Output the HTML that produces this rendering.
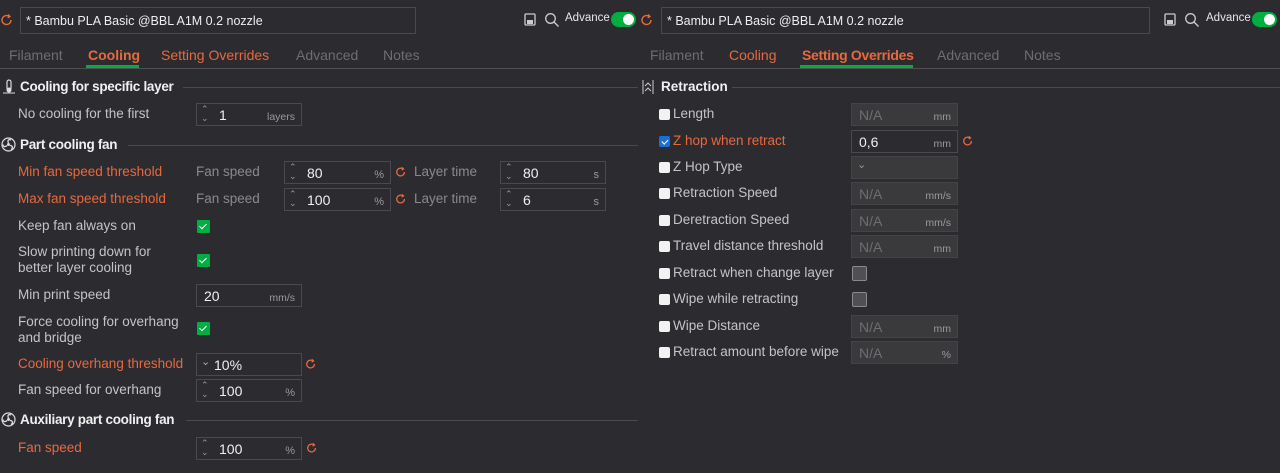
<!DOCTYPE html>
<html><head><meta charset="utf-8"><style>
*{margin:0;padding:0;box-sizing:border-box}
body{width:1280px;height:473px;background:#2c2c30;font-family:"Liberation Sans",sans-serif;font-size:13.5px;color:#c4c4c4;position:relative;overflow:hidden}
.a{position:absolute;white-space:nowrap}
.o{color:#e8683f}
.g{color:#8a8a8e}
.h{font-weight:bold;color:#f0f0f0;font-size:13.5px}
.box{position:absolute;border:1px solid #4a4a4e;height:23px}
.dis{background:#3a3a3d;border-color:#444447}
.v{position:absolute;left:22px;top:3px;color:#f0f0f0;font-size:14px}
.u{position:absolute;right:6px;top:7px;color:#9a9a9a;font-size:10.5px}
.sp{position:absolute;left:4px;top:1px;font-size:9px;color:#999;line-height:9px}
.line{position:absolute;height:1px;background:#4a4a4e}
.cb{position:absolute;width:13px;height:13px;background:#00ae42;border-radius:1px}
.cb::after{content:"";position:absolute;left:4px;top:2px;width:3px;height:6px;border:solid #fff;border-width:0 1.5px 1.5px 0;transform:rotate(45deg)}
.wc{position:absolute;width:11px;height:11px;background:#f2f2f2;border-radius:2px}
.bc{position:absolute;width:11px;height:11px;background:#1b6fd1;border-radius:2px}
.bc::after{content:"";position:absolute;left:3.5px;top:1.5px;width:2.5px;height:5px;border:solid #fff;border-width:0 1.2px 1.2px 0;transform:rotate(45deg)}
.gc{position:absolute;width:15px;height:15px;background:#505054;border:1px solid #8a8a8e;border-radius:2px}
.tog{position:absolute;width:25px;height:15px;background:#00ae42;border-radius:8px}
.tog::after{content:"";position:absolute;right:2px;top:2px;width:11px;height:11px;background:#fff;border-radius:50%}
.tab{font-size:14px;top:47px}
</style></head><body>
<svg class="a" style="left:0;top:13px" width="14" height="14" viewBox="0 0 14 14"><path d="M11 7a4.5 4.5 0 1 1-2-3.7" fill="none" stroke="#e8683f" stroke-width="1.4"/><path d="M8 1.5l2 2-2.3 1.3" fill="none" stroke="#e8683f" stroke-width="1.3"/></svg>
<div class="box" style="left:20px;top:7px;width:396px;height:27px"><span class="a" style="left:5px;top:6px;color:#eee;font-size:12.5px">* Bambu PLA Basic @BBL A1M 0.2 nozzle</span></div>
<svg class="a" style="left:524px;top:13px" width="12" height="13"><rect x="1" y="1" width="10" height="11" rx="1" fill="none" stroke="#ccc" stroke-width="1.3"/><rect x="3" y="7" width="6" height="4" fill="#ccc"/></svg>
<svg class="a" style="left:544px;top:12px" width="16" height="16"><circle cx="6.5" cy="6.5" r="4.8" fill="none" stroke="#ccc" stroke-width="1.3"/><path d="M10 10l4.5 4.5" stroke="#ccc" stroke-width="1.3"/></svg>
<span class="a" style="left:565px;top:12px;font-size:11.5px;color:#e8e8e8">Advance</span>
<div class="tog" style="left:611px;top:12px"></div>
<svg class="a" style="left:640px;top:13px" width="14" height="14" viewBox="0 0 14 14"><path d="M11 7a4.5 4.5 0 1 1-2-3.7" fill="none" stroke="#e8683f" stroke-width="1.4"/><path d="M8 1.5l2 2-2.3 1.3" fill="none" stroke="#e8683f" stroke-width="1.3"/></svg>
<div class="box" style="left:661px;top:7px;width:489px;height:27px"><span class="a" style="left:5px;top:6px;color:#eee;font-size:12.5px">* Bambu PLA Basic @BBL A1M 0.2 nozzle</span></div>
<svg class="a" style="left:1164px;top:13px" width="12" height="13"><rect x="1" y="1" width="10" height="11" rx="1" fill="none" stroke="#ccc" stroke-width="1.3"/><rect x="3" y="7" width="6" height="4" fill="#ccc"/></svg>
<svg class="a" style="left:1184px;top:12px" width="16" height="16"><circle cx="6.5" cy="6.5" r="4.8" fill="none" stroke="#ccc" stroke-width="1.3"/><path d="M10 10l4.5 4.5" stroke="#ccc" stroke-width="1.3"/></svg>
<span class="a" style="left:1206px;top:12px;font-size:11.5px;color:#e8e8e8">Advance</span>
<div class="tog" style="left:1252px;top:12px"></div>
<span class="a tab" style="left:9px;color:#6e6e72">Filament</span>
<span class="a o tab" style="left:88px;font-weight:bold">Cooling</span>
<div class="a" style="left:86px;top:65px;width:53px;height:3px;background:#00ae42"></div>
<span class="a o tab" style="left:161px">Setting Overrides</span>
<span class="a tab" style="left:296px;color:#6e6e72">Advanced</span>
<span class="a tab" style="left:383px;color:#6e6e72">Notes</span>
<span class="a tab" style="left:650px;color:#6e6e72">Filament</span>
<span class="a o tab" style="left:729px">Cooling</span>
<span class="a o tab" style="left:802px;font-weight:bold;letter-spacing:-0.3px">Setting Overrides</span>
<div class="a" style="left:800px;top:65px;width:113px;height:3px;background:#00ae42"></div>
<span class="a tab" style="left:937px;color:#6e6e72">Advanced</span>
<span class="a tab" style="left:1024px;color:#6e6e72">Notes</span>
<div class="line" style="left:0;top:68px;width:1280px;background:#505054"></div>
<svg class="a" style="left:2px;top:79px" width="14" height="15"><rect x="5" y="1" width="4" height="10" rx="2" fill="none" stroke="#ddd" stroke-width="1.2"/><circle cx="7" cy="11" r="2.5" fill="#ddd"/><path d="M1 14h12" stroke="#ddd"/></svg>
<span class="a h" style="left:20px;top:79px;letter-spacing:-0.3px">Cooling for specific layer</span>
<div class="line" style="left:183px;top:87px;width:455px"></div>
<span class="a" style="left:18px;top:106px">No cooling for the first</span>
<div class="box" style="left:196px;top:103px;width:106px"><div class="sp">⌃<br>⌄</div><span class="v">1</span><span class="u">layers</span></div>
<svg class="a" style="left:1px;top:137px" width="15" height="15"><circle cx="7.5" cy="7.5" r="6.5" fill="none" stroke="#ddd" stroke-width="1.2"/><circle cx="7.5" cy="7.5" r="1.5" fill="#ddd"/><path d="M7.5 6C6 3 8 2 10 3M9 8.5c3 0 3 3 1 4M6 8.5c-2 2-4 1-4-1" fill="none" stroke="#ddd" stroke-width="1.3"/></svg>
<span class="a h" style="left:20px;top:137px;letter-spacing:-0.3px">Part cooling fan</span>
<div class="line" style="left:128px;top:145px;width:510px"></div>
<span class="a o" style="left:18px;top:164px">Min fan speed threshold</span>
<span class="a g" style="left:196px;top:164px">Fan speed</span>
<div class="box" style="left:284px;top:161px;width:107px"><div class="sp">⌃<br>⌄</div><span class="v">80</span><span class="u" style="font-size:11px">%</span></div>
<svg class="a" style="left:395px;top:166px" width="12" height="12" viewBox="0 0 14 14"><path d="M11 7a4.5 4.5 0 1 1-2-3.7" fill="none" stroke="#e8683f" stroke-width="1.5"/><path d="M8 1.5l2 2-2.3 1.3" fill="none" stroke="#e8683f" stroke-width="1.4"/></svg>
<span class="a g" style="left:414px;top:164px">Layer time</span>
<div class="box" style="left:500px;top:161px;width:106px"><div class="sp">⌃<br>⌄</div><span class="v">80</span><span class="u" style="font-size:11px">s</span></div>
<span class="a o" style="left:18px;top:191px">Max fan speed threshold</span>
<span class="a g" style="left:196px;top:191px">Fan speed</span>
<div class="box" style="left:284px;top:188px;width:107px"><div class="sp">⌃<br>⌄</div><span class="v">100</span><span class="u" style="font-size:11px">%</span></div>
<svg class="a" style="left:395px;top:193px" width="12" height="12" viewBox="0 0 14 14"><path d="M11 7a4.5 4.5 0 1 1-2-3.7" fill="none" stroke="#e8683f" stroke-width="1.5"/><path d="M8 1.5l2 2-2.3 1.3" fill="none" stroke="#e8683f" stroke-width="1.4"/></svg>
<span class="a g" style="left:414px;top:191px">Layer time</span>
<div class="box" style="left:500px;top:188px;width:106px"><div class="sp">⌃<br>⌄</div><span class="v">6</span><span class="u" style="font-size:11px">s</span></div>
<span class="a" style="left:18px;top:218px">Keep fan always on</span>
<div class="cb" style="left:197px;top:220px"></div>
<span class="a" style="left:18px;top:244px;line-height:16px">Slow printing down for<br>better layer cooling</span>
<div class="cb" style="left:197px;top:254px"></div>
<span class="a" style="left:18px;top:287px">Min print speed</span>
<div class="box" style="left:196px;top:284px;width:106px"><span class="v" style="left:7px">20</span><span class="u">mm/s</span></div>
<span class="a" style="left:18px;top:314px;line-height:16px">Force cooling for overhang<br>and bridge</span>
<div class="cb" style="left:197px;top:322px"></div>
<span class="a o" style="left:18px;top:356px">Cooling overhang threshold</span>
<div class="box" style="left:196px;top:353px;width:106px"><span class="a" style="left:4px;top:1px;color:#aaa;font-size:11px">⌄</span><span class="v" style="left:17px">10%</span></div>
<svg class="a" style="left:305px;top:358px" width="12" height="12" viewBox="0 0 14 14"><path d="M11 7a4.5 4.5 0 1 1-2-3.7" fill="none" stroke="#e8683f" stroke-width="1.5"/><path d="M8 1.5l2 2-2.3 1.3" fill="none" stroke="#e8683f" stroke-width="1.4"/></svg>
<span class="a" style="left:18px;top:382px">Fan speed for overhang</span>
<div class="box" style="left:196px;top:379px;width:106px"><div class="sp">⌃<br>⌄</div><span class="v">100</span><span class="u" style="font-size:11px">%</span></div>
<svg class="a" style="left:1px;top:412px" width="15" height="15"><circle cx="7.5" cy="7.5" r="6.5" fill="none" stroke="#ddd" stroke-width="1.2"/><circle cx="7.5" cy="7.5" r="1.5" fill="#ddd"/><path d="M7.5 6C6 3 8 2 10 3M9 8.5c3 0 3 3 1 4M6 8.5c-2 2-4 1-4-1" fill="none" stroke="#ddd" stroke-width="1.3"/></svg>
<span class="a h" style="left:20px;top:412px;letter-spacing:-0.3px">Auxiliary part cooling fan</span>
<div class="line" style="left:186px;top:420px;width:452px"></div>
<span class="a o" style="left:18px;top:440px">Fan speed</span>
<div class="box" style="left:196px;top:437px;width:106px"><div class="sp">⌃<br>⌄</div><span class="v">100</span><span class="u" style="font-size:11px">%</span></div>
<svg class="a" style="left:306px;top:442px" width="12" height="12" viewBox="0 0 14 14"><path d="M11 7a4.5 4.5 0 1 1-2-3.7" fill="none" stroke="#e8683f" stroke-width="1.5"/><path d="M8 1.5l2 2-2.3 1.3" fill="none" stroke="#e8683f" stroke-width="1.4"/></svg>
<svg class="a" style="left:642px;top:80px" width="12" height="14"><path d="M1 0v14M11 0v14" stroke="#ccc"/><path d="M3 6l3-3 3 3M3 11l3-3 3 3" fill="none" stroke="#ccc"/></svg>
<span class="a h" style="left:661px;top:79px">Retraction</span>
<div class="line" style="left:732px;top:87px;width:548px"></div>
<div class="wc" style="left:659px;top:109px"></div><span class="a" style="left:673px;top:106px">Length</span>
<div class="box dis" style="left:851px;top:103px;width:107px"><span class="v" style="left:7px;color:#6e6e72">N/A</span><span class="u">mm</span></div>
<div class="bc" style="left:659px;top:136px"></div><span class="a o" style="left:673px;top:133px">Z hop when retract</span>
<div class="box" style="left:851px;top:130px;width:107px"><span class="v" style="left:7px">0,6</span><span class="u">mm</span></div>
<svg class="a" style="left:962px;top:135px" width="12" height="12" viewBox="0 0 14 14"><path d="M11 7a4.5 4.5 0 1 1-2-3.7" fill="none" stroke="#e8683f" stroke-width="1.5"/><path d="M8 1.5l2 2-2.3 1.3" fill="none" stroke="#e8683f" stroke-width="1.4"/></svg>
<div class="wc" style="left:659px;top:162px"></div><span class="a" style="left:673px;top:159px">Z Hop Type</span>
<div class="box dis" style="left:851px;top:156px;width:107px"><span class="a" style="left:5px;top:1px;color:#999;font-size:11px">⌄</span></div>
<div class="wc" style="left:659px;top:188px"></div><span class="a" style="left:673px;top:185px">Retraction Speed</span>
<div class="box dis" style="left:851px;top:182px;width:107px"><span class="v" style="left:7px;color:#6e6e72">N/A</span><span class="u">mm/s</span></div>
<div class="wc" style="left:659px;top:215px"></div><span class="a" style="left:673px;top:212px">Deretraction Speed</span>
<div class="box dis" style="left:851px;top:209px;width:107px"><span class="v" style="left:7px;color:#6e6e72">N/A</span><span class="u">mm/s</span></div>
<div class="wc" style="left:659px;top:241px"></div><span class="a" style="left:673px;top:238px">Travel distance threshold</span>
<div class="box dis" style="left:851px;top:235px;width:107px"><span class="v" style="left:7px;color:#6e6e72">N/A</span><span class="u">mm</span></div>
<div class="wc" style="left:659px;top:268px"></div><span class="a" style="left:673px;top:265px">Retract when change layer</span>
<div class="gc" style="left:852px;top:266px"></div>
<div class="wc" style="left:659px;top:294px"></div><span class="a" style="left:673px;top:291px">Wipe while retracting</span>
<div class="gc" style="left:852px;top:292px"></div>
<div class="wc" style="left:659px;top:321px"></div><span class="a" style="left:673px;top:318px">Wipe Distance</span>
<div class="box dis" style="left:851px;top:315px;width:107px"><span class="v" style="left:7px;color:#6e6e72">N/A</span><span class="u">mm</span></div>
<div class="wc" style="left:659px;top:347px"></div><span class="a" style="left:673px;top:344px">Retract amount before wipe</span>
<div class="box dis" style="left:851px;top:341px;width:107px"><span class="v" style="left:7px;color:#6e6e72">N/A</span><span class="u">%</span></div>
</body></html>
